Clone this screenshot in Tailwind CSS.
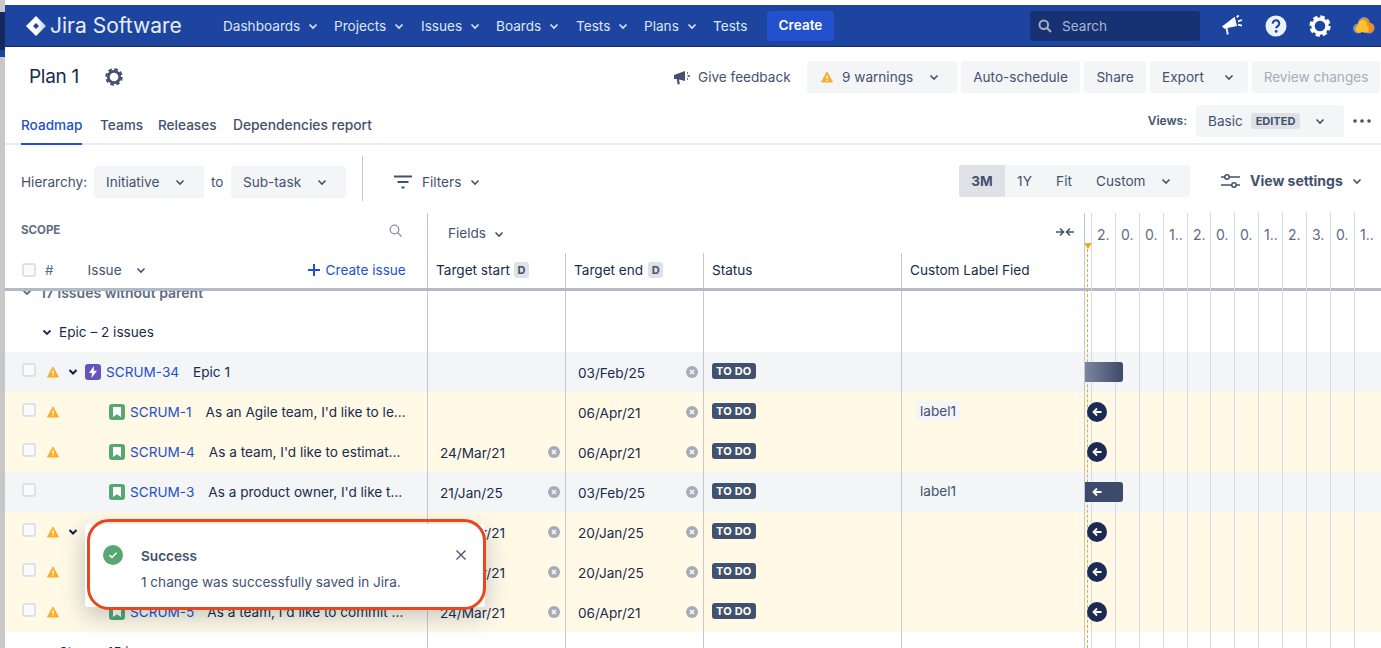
<!DOCTYPE html>
<html lang="en">
<head>
  <meta charset="UTF-8" />
  <title>Plan 1 - Roadmap</title>
  <script src="https://cdn.jsdelivr.net/npm/@tailwindcss/browser@4"></script>
</head>
<body class="bg-white text-[#172b4d] font-['Inter',sans-serif] text-[13.6px]">
<div class="relative flex w-[1381px] h-[648px] overflow-hidden">
  <!-- window edge -->
  <div class="w-[5px] shrink-0 flex flex-col bg-[#c8c8c8]">
    <div class="h-[12px]"></div>
    <div class="h-[38px] bg-[#15295e]"></div>
    <div class="h-[7px] bg-[#1d459f]"></div>
  </div>

  <div class="flex-1 flex flex-col min-w-0">
    <div class="h-[5px] bg-white"></div>

    <!-- Top nav -->
    <header class="h-[42px] shrink-0 flex items-center bg-[#1d459f] border-b border-[#1b2b52] text-[#dfe6f5]">
      <svg class="ml-[21px] w-[20px] h-[20px]" viewBox="0 0 20 20"><defs><linearGradient id="jl" x1="0" x2="1" y1="0" y2="0"><stop offset="0.55" stop-color="#fff"/><stop offset="1" stop-color="#b9c8ea"/></linearGradient></defs><path fill="url(#jl)" fill-rule="evenodd" d="M10 0L20 10 10 20 0 10zM10 7L7 10l3 3 3-3z"/></svg>
      <span class="ml-[4px] w-[173px] text-[21px] leading-none text-white/90">Jira Software</span>
      <nav class="flex items-center pt-[1px]">
        <a class="flex items-center w-[111px]">Dashboards<svg class="ml-[8px] w-[10px] h-[10px]" viewBox="0 0 10 10"><path d="M1.500 3.500L5 7l3.500-3.500" fill="none" stroke="currentColor" stroke-width="1.600"/></svg></a>
        <a class="flex items-center w-[87px]">Projects<svg class="ml-[8px] w-[10px] h-[10px]" viewBox="0 0 10 10"><path d="M1.500 3.500L5 7l3.500-3.500" fill="none" stroke="currentColor" stroke-width="1.600"/></svg></a>
        <a class="flex items-center w-[75px]">Issues<svg class="ml-[8px] w-[10px] h-[10px]" viewBox="0 0 10 10"><path d="M1.500 3.500L5 7l3.500-3.500" fill="none" stroke="currentColor" stroke-width="1.600"/></svg></a>
        <a class="flex items-center w-[80px]">Boards<svg class="ml-[8px] w-[10px] h-[10px]" viewBox="0 0 10 10"><path d="M1.500 3.500L5 7l3.500-3.500" fill="none" stroke="currentColor" stroke-width="1.600"/></svg></a>
        <a class="flex items-center w-[68px]">Tests<svg class="ml-[8px] w-[10px] h-[10px]" viewBox="0 0 10 10"><path d="M1.500 3.500L5 7l3.500-3.500" fill="none" stroke="currentColor" stroke-width="1.600"/></svg></a>
        <a class="flex items-center w-[69px]">Plans<svg class="ml-[8px] w-[10px] h-[10px]" viewBox="0 0 10 10"><path d="M1.500 3.500L5 7l3.500-3.500" fill="none" stroke="currentColor" stroke-width="1.600"/></svg></a>
        <a class="w-[54px]">Tests</a>
        <button class="w-[67px] h-[30px] rounded-[3px] bg-[#2350cd] text-white font-semibold mt-[-1px]">Create</button>
      </nav>
      <div class="ml-[196px] w-[170px] h-[30px] rounded-[3px] bg-[#163273] flex items-center text-[#a9b5d0]">
        <svg class="ml-[8px] w-[14px] h-[14px]" viewBox="0 0 14 14"><circle cx="5.800" cy="5.800" r="4.300" fill="none" stroke="#a9b0bd" stroke-width="2"/><path d="M9 9l4 4" stroke="#a9b0bd" stroke-width="2.200"/></svg>
        <span class="ml-[10px] pt-[1px]">Search</span>
      </div>
      <svg class="ml-[21px] w-[22px] h-[22px]" viewBox="0 0 22 22"><path fill="#fff" d="M1 11.500L13.700 1.700 16 11l-6 1.300-6.500 1.400z"/><path d="M5.500 13l1.300 6.500M15.700 2.300l2-2M17 6.300L21 5M17 9.700l4 1" stroke="#fff" stroke-width="1.800" fill="none"/></svg>
      <svg class="ml-[22px] w-[22px] h-[22px]" viewBox="0 0 22 22"><circle cx="11" cy="11" r="10.500" fill="#edf1fa"/><path d="M7.800 8.600a3.200 3.200 0 116 1.400c-.6 1-2.600 1.600-2.600 3.200" fill="none" stroke="#1d459f" stroke-width="2.200"/><circle cx="11.200" cy="16.400" r="1.400" fill="#1d459f"/></svg>
      <svg class="ml-[22px] w-[22px] h-[22px]" viewBox="0 0 22 22"><circle cx="11" cy="11" r="7" fill="none" stroke="#fff" stroke-width="3.400"/><circle cx="11" cy="11" r="9.400" fill="none" stroke="#fff" stroke-width="2.600" stroke-dasharray="4.400 3"/></svg>
      <svg class="ml-[22px] w-[22px] h-[17px] shrink-0" viewBox="0 0 22 17"><g fill="#5b9bd8"><circle cx="11" cy="5.700" r="5.700"/><circle cx="5" cy="11.500" r="5"/><circle cx="16" cy="11" r="5.500"/></g><g fill="#f58a1f"><circle cx="11.500" cy="6" r="5"/><circle cx="6" cy="11.500" r="4.300"/><circle cx="16.200" cy="11" r="5"/></g><g fill="#fbc22d"><circle cx="9.500" cy="7.500" r="4.500"/><circle cx="6.500" cy="12" r="3.800"/><circle cx="12" cy="12" r="3.800"/></g></svg>
    </header>

    <!-- Plan title row -->
    <div class="h-[60px] shrink-0 flex items-center text-[#42526e]">
      <h1 class="ml-[24px] text-[19px] tracking-[-0.3px] text-[#172b4d] w-[76px]">Plan 1</h1>
      <svg class="w-[18px] h-[18px]" viewBox="0 0 22 22"><circle cx="11" cy="11" r="7" fill="none" stroke="#42526e" stroke-width="3.400"/><circle cx="11" cy="11" r="9.400" fill="none" stroke="#42526e" stroke-width="2.600" stroke-dasharray="4.400 3"/></svg>
      <svg class="ml-[551px] w-[17px] h-[15px]" viewBox="0 0 17 15"><path fill="#42526e" d="M0 5l11-4v10L5 9.400l.8 4.600-2.200.5L2.800 9H0z"/><path d="M13 3h1M13.500 6H16M13 9h1" stroke="#42526e" stroke-width="1.400"/></svg>
      <span class="ml-[7px] w-[109px]">Give feedback</span>
      <div class="w-[150px] h-[32px] mr-[4px] rounded-[3px] bg-[#f4f5f7] flex items-center">
        <svg class="ml-[14px] w-[12px] h-[12px]" viewBox="0 0 12 12"><path fill="#fbae2d" stroke="#fbae2d" stroke-linejoin="round" d="M6 1l5.500 10H.5z"/><path d="M6 4.500v3.500M6 9v1" stroke="#fff" stroke-width="1.300"/></svg>
        <span class="ml-[9px] w-[87px]">9 warnings</span>
        <svg class="w-[10px] h-[10px]" viewBox="0 0 10 10"><path d="M1.500 3.500L5 7l3.500-3.500" fill="none" stroke="currentColor" stroke-width="1.600"/></svg>
      </div>
      <button class="w-[119px] h-[32px] mr-[4px] rounded-[3px] bg-[#f4f5f7]">Auto-schedule</button>
      <button class="w-[62px] h-[32px] mr-[4px] rounded-[3px] bg-[#f4f5f7]">Share</button>
      <div class="w-[98px] h-[32px] mr-[4px] rounded-[3px] bg-[#f4f5f7] flex items-center">
        <span class="ml-[12px] w-[62px]">Export</span>
        <svg class="w-[10px] h-[10px]" viewBox="0 0 10 10"><path d="M1.500 3.500L5 7l3.500-3.500" fill="none" stroke="currentColor" stroke-width="1.600"/></svg>
      </div>
      <button class="w-[128px] h-[32px] rounded-[3px] bg-[#f4f5f7] text-[#a5adba]">Review changes</button>
    </div>

    <!-- Tabs -->
    <div class="h-[38px] shrink-0 flex items-start justify-between border-b-2 border-[#ebecf0] text-[#42526e] font-medium">
      <div class="flex h-[38px] ml-[16px]">
        <a class="h-[38px] w-[61px] pt-[8px] border-b-2 border-[#2350cd] text-[#2350cd]">Roadmap</a>
        <a class="ml-[18px] pt-[8px] w-[42px]">Teams</a>
        <a class="ml-[16px] pt-[8px] w-[59px]">Releases</a>
        <a class="ml-[16px] pt-[8px] text-[13.800px]">Dependencies report</a>
      </div>
      <div class="flex items-center mt-[-2px] h-[32px]">
        <span class="text-[12px] font-semibold mr-[9px]">Views:</span>
        <div class="w-[148px] h-[32px] rounded-[3px] bg-[#f4f5f7] flex items-center font-normal">
          <span class="ml-[12px] w-[35px]">Basic</span>
          <span class="ml-[8px] w-[49px] text-center h-[16px] rounded-[3px] bg-[#dfe1e6] text-[11px] font-bold leading-[16px]">EDITED</span>
          <svg class="ml-[15px] w-[10px] h-[10px]" viewBox="0 0 10 10"><path d="M1.500 3.500L5 7l3.500-3.500" fill="none" stroke="currentColor" stroke-width="1.600"/></svg>
        </div>
        <svg class="ml-[9px] mr-[10px] w-[18px] h-[4px]" viewBox="0 0 18 4"><circle cx="2" cy="2" r="1.800" fill="#42526e"/><circle cx="9" cy="2" r="1.800" fill="#42526e"/><circle cx="16" cy="2" r="1.800" fill="#42526e"/></svg>
      </div>
    </div>

    <!-- Hierarchy + filters row -->
    <div class="h-[68px] shrink-0 flex items-center pt-[6px] text-[#42526e]">
      <span class="ml-[16px] w-[73px]">Hierarchy:</span>
      <div class="w-[110px] h-[32px] rounded-[3px] bg-[#f4f5f7] flex items-center">
        <span class="ml-[12px] w-[69px]">Initiative</span>
        <svg class="w-[10px] h-[10px]" viewBox="0 0 10 10"><path d="M1.500 3.500L5 7l3.500-3.500" fill="none" stroke="currentColor" stroke-width="1.600"/></svg>
      </div>
      <span class="ml-[7px] w-[20px]">to</span>
      <div class="w-[115px] h-[32px] rounded-[3px] bg-[#f4f5f7] flex items-center">
        <span class="ml-[12px] w-[74px]">Sub-task</span>
        <svg class="w-[10px] h-[10px]" viewBox="0 0 10 10"><path d="M1.500 3.500L5 7l3.500-3.500" fill="none" stroke="currentColor" stroke-width="1.600"/></svg>
      </div>
      <div class="ml-[16px] mb-[7px] w-px h-[45px] bg-[#c1c7d0]"></div>
      <svg class="ml-[31px] w-[18px] h-[14px]" viewBox="0 0 18 14"><path d="M0 1.500h18M3.500 7h11M7.500 12.500h3" stroke="#42526e" stroke-width="2"/></svg>
      <span class="ml-[10px] w-[48px]">Filters</span>
      <svg class="w-[10px] h-[10px]" viewBox="0 0 10 10"><path d="M1.500 3.500L5 7l3.500-3.500" fill="none" stroke="currentColor" stroke-width="1.600"/></svg>
      <div class="ml-[479px] h-[32px] w-[231px] rounded-[3px] bg-[#f4f5f7] flex items-center mt-[-2px] overflow-hidden">
        <span class="w-[46px] h-[32px] leading-[32px] text-center font-bold bg-[#dfe1e6]">3M</span>
        <span class="w-[39px] text-center">1Y</span>
        <span class="w-[40px] text-center">Fit</span>
        <span class="ml-[12px] w-[65px]">Custom</span>
        <svg class="w-[10px] h-[10px]" viewBox="0 0 10 10"><path d="M1.500 3.500L5 7l3.500-3.500" fill="none" stroke="currentColor" stroke-width="1.600"/></svg>
      </div>
      <svg class="ml-[31px] w-[19px] h-[14px] mt-[-2px]" viewBox="0 0 19 14"><path d="M0 3h19M0 11h19" stroke="#42526e" stroke-width="1.600"/><circle cx="6" cy="3" r="2.200" fill="#fff" stroke="#42526e" stroke-width="1.500"/><circle cx="13" cy="11" r="2.200" fill="#fff" stroke="#42526e" stroke-width="1.500"/></svg>
      <span class="ml-[10px] w-[102px] text-[14px] font-bold mt-[-4px]">View settings</span>
      <svg class="w-[10px] h-[10px] mt-[-2px]" viewBox="0 0 10 10"><path d="M1.500 3.500L5 7l3.500-3.500" fill="none" stroke="currentColor" stroke-width="1.600"/></svg>
    </div>

    <!-- Table header -->
    <div class="relative h-[78px] shrink-0 grid grid-cols-[422px_138px_138px_198px_183px_1fr] grid-rows-[40px_35px] border-b-[3px] border-[#b3bac5] text-[#42526e]">
      <div class="col-start-1 row-start-1 flex items-center justify-between pl-[16px] pr-[25px] pb-[4px]">
        <span class="text-[11.500px] font-bold text-[#5e6c84]">SCOPE</span>
        <svg class="w-[13px] h-[13px] mb-[2px]" viewBox="0 0 13 13"><circle cx="5.500" cy="5.500" r="4.300" fill="none" stroke="#8993a4" stroke-width="1.300"/><path d="M8.500 8.500l4 4" stroke="#8993a4" stroke-width="1.300"/></svg>
      </div>
      <div class="col-start-2 col-span-4 row-start-1 border-l border-[#c4c7d4] flex items-center pl-[20px] pt-[1px]">
        <span class="w-[46px]">Fields</span>
        <svg class="w-[10px] h-[10px]" viewBox="0 0 10 10"><path d="M1.500 3.500L5 7l3.500-3.500" fill="none" stroke="currentColor" stroke-width="1.600"/></svg>
        <svg class="ml-[552px] mb-[4px] w-[18px] h-[10px]" viewBox="0 0 18 10"><path d="M0 5h7M4 1.500L7.500 5 4 8.500M18 5h-7M14 1.500L10.500 5 14 8.500" fill="none" stroke="#42526e" stroke-width="1.600"/></svg>
      </div>
      <div class="col-start-1 row-start-2 flex items-center pb-[1px]">
        <span class="ml-[17px] w-[14px] h-[14px] rounded-[3px] border-2 border-[#dfe1e6] bg-[#fafbfc]"></span>
        <span class="ml-[9px] text-[#5e6c84]">#</span>
        <span class="ml-[34px] w-[48px]">Issue</span>
        <svg class="w-[10px] h-[10px]" viewBox="0 0 10 10"><path d="M1.500 3.500L5 7l3.500-3.500" fill="none" stroke="currentColor" stroke-width="1.600"/></svg>
        <svg class="ml-[162px] w-[12px] h-[12px]" viewBox="0 0 12 12"><path d="M6 0v12M0 6h12" stroke="#2350cd" stroke-width="2"/></svg>
        <span class="ml-[6px] text-[#2350cd]">Create issue</span>
      </div>
      <div class="row-start-2 border-l border-[#c4c7d4] flex items-center pl-[8px] pb-[1px] text-[#172b4d]">Target start<span class="ml-[4px] w-[15px] h-[16px] rounded-[3px] bg-[#dfe1e6] text-[#42526e] text-[11px] font-bold text-center leading-[16px]">D</span></div>
      <div class="row-start-2 border-l border-[#c4c7d4] flex items-center pl-[8px] pb-[1px] text-[#172b4d]">Target end<span class="ml-[5px] w-[15px] h-[16px] rounded-[3px] bg-[#dfe1e6] text-[#42526e] text-[11px] font-bold text-center leading-[16px]">D</span></div>
      <div class="row-start-2 border-l border-[#c4c7d4] flex items-center pl-[8px] pb-[1px] text-[#172b4d]">Status</div>
      <div class="row-start-2 border-l border-[#c4c7d4] flex items-center pl-[8px] pb-[1px] text-[#172b4d]">Custom Label Fied</div>
      <div class="col-start-6 row-start-1 row-span-2 border-l border-[#c4c7d4]"></div>
    </div>

    <!-- Rows: scrolled under the header -->
    <div class="relative flex-1 min-h-0 overflow-hidden">
      <div class="mt-[-19px]">
        <!-- group rows -->
        <div class="h-[40px] grid grid-cols-[422px_138px_138px_198px_183px_1fr]">
          <div class="flex items-center text-[14px] font-semibold text-[#5e6c84]">
            <svg class="ml-[17px] w-[10px] h-[10px]" viewBox="0 0 10 10"><path d="M1.500 3.500L5 7l3.500-3.500" fill="none" stroke="currentColor" stroke-width="1.800"/></svg>
            <span class="ml-[8px]">17 issues without parent</span>
          </div>
          <div class="border-l border-[#c4c7d4]"></div><div class="border-l border-[#c4c7d4]"></div><div class="border-l border-[#c4c7d4]"></div><div class="border-l border-[#c4c7d4]"></div><div class="border-l border-[#c4c7d4]"></div>
        </div>
        <div class="h-[40px] grid grid-cols-[422px_138px_138px_198px_183px_1fr]">
          <div class="flex items-center">
            <svg class="ml-[37px] w-[10px] h-[10px]" viewBox="0 0 10 10"><path d="M1.500 3.500L5 7l3.500-3.500" fill="none" stroke="currentColor" stroke-width="1.800"/></svg>
            <span class="ml-[7px]">Epic – 2 issues</span>
          </div>
          <div class="border-l border-[#c4c7d4]"></div><div class="border-l border-[#c4c7d4]"></div><div class="border-l border-[#c4c7d4]"></div><div class="border-l border-[#c4c7d4]"></div><div class="border-l border-[#c4c7d4]"></div>
        </div>

        <!-- SCRUM-34 -->
        <div class="h-[40px] grid grid-cols-[422px_138px_138px_198px_183px_1fr] bg-[#f4f5f7]">
          <div class="flex items-center">
            <span class="ml-[17px] mb-[4px] w-[14px] h-[14px] rounded-[3px] border-2 border-[#dfe1e6] bg-[#fafbfc]"></span>
            <svg class="ml-[11px] w-[12px] h-[12px]" viewBox="0 0 12 12"><path fill="#fbae2d" stroke="#fbae2d" stroke-linejoin="round" d="M6 1l5.500 10H.5z"/><path d="M6 4.500v3.500M6 9v1" stroke="#fff" stroke-width="1.300"/></svg>
            <svg class="ml-[9px] w-[10px] h-[10px]" viewBox="0 0 10 10"><path d="M1.500 3L5 6.500 8.500 3" fill="none" stroke="#091e42" stroke-width="2"/></svg>
            <span class="ml-[7px] w-[16px] h-[16px] rounded-[3px] bg-[#6554c0] flex items-center justify-center"><svg class="w-[10px] h-[12px]" viewBox="0 0 10 12"><path fill="#fff" d="M6 0L1 7h3L3.500 12 9 4.800H5.700z"/></svg></span>
            <span class="ml-[5px] text-[#2350cd]">SCRUM-34</span>
            <span class="ml-[14px]">Epic 1</span>
          </div>
          <div class="border-l border-[#c4c7d4]"></div>
          <div class="border-l border-[#c4c7d4] flex items-center pl-[12px] pr-[5px] justify-between"><span class="pt-[2px]">03/Feb/25</span><svg class="w-[12px] h-[12px]" viewBox="0 0 12 12"><circle cx="6" cy="6" r="6" fill="#a5adba"/><path d="M4 4l4 4M8 4l-4 4" stroke="#f4f5f7" stroke-width="1.700"/></svg></div>
          <div class="border-l border-[#c4c7d4] flex items-center pl-[8px] pb-[2px]"><span class="px-[4px] h-[16px] rounded-[3px] bg-[#42526e] text-white text-[11px] tracking-[0.2px] font-bold leading-[16px]">TO DO</span></div>
          <div class="border-l border-[#c4c7d4]"></div>
          <div class="border-l border-[#c4c7d4]"></div>
        </div>

        <!-- SCRUM-1 -->
        <div class="h-[40px] grid grid-cols-[422px_138px_138px_198px_183px_1fr] bg-[#fff9e6]">
          <div class="flex items-center">
            <span class="ml-[17px] mb-[4px] w-[14px] h-[14px] shrink-0 rounded-[3px] border-2 border-[#dfe1e6] bg-[#fafbfc]"></span>
            <svg class="ml-[11px] w-[12px] h-[12px] shrink-0" viewBox="0 0 12 12"><path fill="#fbae2d" stroke="#fbae2d" stroke-linejoin="round" d="M6 1l5.500 10H.5z"/><path d="M6 4.500v3.500M6 9v1" stroke="#fff" stroke-width="1.300"/></svg>
            <span class="ml-[50px] w-[16px] h-[16px] shrink-0 rounded-[3px] bg-[#57a773] flex items-center justify-center"><svg class="w-[8px] h-[10px]" viewBox="0 0 8 10"><path fill="#fff" d="M0 0h8v10L4 7.200 0 10z"/></svg></span>
            <span class="ml-[5px] shrink-0 text-[#2350cd]">SCRUM-1</span>
            <span class="ml-[14px] whitespace-nowrap">As an Agile team, I'd like to le...</span>
          </div>
          <div class="border-l border-[#c4c7d4]"></div>
          <div class="border-l border-[#c4c7d4] flex items-center pl-[12px] pr-[5px] justify-between"><span class="pt-[2px]">06/Apr/21</span><svg class="w-[12px] h-[12px]" viewBox="0 0 12 12"><circle cx="6" cy="6" r="6" fill="#a5adba"/><path d="M4 4l4 4M8 4l-4 4" stroke="#fff9e6" stroke-width="1.700"/></svg></div>
          <div class="border-l border-[#c4c7d4] flex items-center pl-[8px] pb-[2px]"><span class="px-[4px] h-[16px] rounded-[3px] bg-[#42526e] text-white text-[11px] tracking-[0.2px] font-bold leading-[16px]">TO DO</span></div>
          <div class="border-l border-[#c4c7d4] flex items-center pl-[14px] pb-[2px]"><span class="px-[4px] h-[20px] rounded-[3px] bg-[#f4f5f7] text-[#42526e] leading-[20px]">label1</span></div>
          <div class="border-l border-[#c4c7d4]"></div>
        </div>

        <!-- SCRUM-4 -->
        <div class="h-[40px] grid grid-cols-[422px_138px_138px_198px_183px_1fr] bg-[#fff9e6]">
          <div class="flex items-center">
            <span class="ml-[17px] mb-[4px] w-[14px] h-[14px] shrink-0 rounded-[3px] border-2 border-[#dfe1e6] bg-[#fafbfc]"></span>
            <svg class="ml-[11px] w-[12px] h-[12px] shrink-0" viewBox="0 0 12 12"><path fill="#fbae2d" stroke="#fbae2d" stroke-linejoin="round" d="M6 1l5.500 10H.5z"/><path d="M6 4.500v3.500M6 9v1" stroke="#fff" stroke-width="1.300"/></svg>
            <span class="ml-[50px] w-[16px] h-[16px] shrink-0 rounded-[3px] bg-[#57a773] flex items-center justify-center"><svg class="w-[8px] h-[10px]" viewBox="0 0 8 10"><path fill="#fff" d="M0 0h8v10L4 7.200 0 10z"/></svg></span>
            <span class="ml-[5px] shrink-0 text-[#2350cd]">SCRUM-4</span>
            <span class="ml-[14px] whitespace-nowrap">As a team, I'd like to estimat...</span>
          </div>
          <div class="border-l border-[#c4c7d4] flex items-center pl-[12px] pr-[5px] justify-between"><span class="pt-[2px]">24/Mar/21</span><svg class="w-[12px] h-[12px]" viewBox="0 0 12 12"><circle cx="6" cy="6" r="6" fill="#a5adba"/><path d="M4 4l4 4M8 4l-4 4" stroke="#fff9e6" stroke-width="1.700"/></svg></div>
          <div class="border-l border-[#c4c7d4] flex items-center pl-[12px] pr-[5px] justify-between"><span class="pt-[2px]">06/Apr/21</span><svg class="w-[12px] h-[12px]" viewBox="0 0 12 12"><circle cx="6" cy="6" r="6" fill="#a5adba"/><path d="M4 4l4 4M8 4l-4 4" stroke="#fff9e6" stroke-width="1.700"/></svg></div>
          <div class="border-l border-[#c4c7d4] flex items-center pl-[8px] pb-[2px]"><span class="px-[4px] h-[16px] rounded-[3px] bg-[#42526e] text-white text-[11px] tracking-[0.2px] font-bold leading-[16px]">TO DO</span></div>
          <div class="border-l border-[#c4c7d4]"></div>
          <div class="border-l border-[#c4c7d4]"></div>
        </div>

        <!-- SCRUM-3 -->
        <div class="h-[40px] grid grid-cols-[422px_138px_138px_198px_183px_1fr] bg-[#f4f5f7]">
          <div class="flex items-center">
            <span class="ml-[17px] mb-[4px] w-[14px] h-[14px] shrink-0 rounded-[3px] border-2 border-[#dfe1e6] bg-[#fafbfc]"></span>
            <span class="ml-[73px] w-[16px] h-[16px] shrink-0 rounded-[3px] bg-[#57a773] flex items-center justify-center"><svg class="w-[8px] h-[10px]" viewBox="0 0 8 10"><path fill="#fff" d="M0 0h8v10L4 7.200 0 10z"/></svg></span>
            <span class="ml-[5px] shrink-0 text-[#2350cd]">SCRUM-3</span>
            <span class="ml-[14px] whitespace-nowrap">As a product owner, I'd like t...</span>
          </div>
          <div class="border-l border-[#c4c7d4] flex items-center pl-[12px] pr-[5px] justify-between"><span class="pt-[2px]">21/Jan/25</span><svg class="w-[12px] h-[12px]" viewBox="0 0 12 12"><circle cx="6" cy="6" r="6" fill="#a5adba"/><path d="M4 4l4 4M8 4l-4 4" stroke="#f4f5f7" stroke-width="1.700"/></svg></div>
          <div class="border-l border-[#c4c7d4] flex items-center pl-[12px] pr-[5px] justify-between"><span class="pt-[2px]">03/Feb/25</span><svg class="w-[12px] h-[12px]" viewBox="0 0 12 12"><circle cx="6" cy="6" r="6" fill="#a5adba"/><path d="M4 4l4 4M8 4l-4 4" stroke="#f4f5f7" stroke-width="1.700"/></svg></div>
          <div class="border-l border-[#c4c7d4] flex items-center pl-[8px] pb-[2px]"><span class="px-[4px] h-[16px] rounded-[3px] bg-[#42526e] text-white text-[11px] tracking-[0.2px] font-bold leading-[16px]">TO DO</span></div>
          <div class="border-l border-[#c4c7d4] flex items-center pl-[14px] pb-[2px]"><span class="px-[4px] text-[#42526e]">label1</span></div>
          <div class="border-l border-[#c4c7d4]"></div>
        </div>

        <!-- rows behind the toast -->
        <div class="h-[40px] grid grid-cols-[422px_138px_138px_198px_183px_1fr] bg-[#fff9e6]">
          <div class="flex items-center">
            <span class="ml-[17px] mb-[4px] w-[14px] h-[14px] shrink-0 rounded-[3px] border-2 border-[#dfe1e6] bg-[#fafbfc]"></span>
            <svg class="ml-[11px] w-[12px] h-[12px] shrink-0" viewBox="0 0 12 12"><path fill="#fbae2d" stroke="#fbae2d" stroke-linejoin="round" d="M6 1l5.500 10H.5z"/><path d="M6 4.500v3.500M6 9v1" stroke="#fff" stroke-width="1.300"/></svg>
            <svg class="ml-[9px] w-[10px] h-[10px]" viewBox="0 0 10 10"><path d="M1.500 3L5 6.500 8.500 3" fill="none" stroke="#091e42" stroke-width="2"/></svg>
          </div>
          <div class="border-l border-[#c4c7d4] flex items-center pl-[12px] pr-[5px] justify-between"><span class="pt-[2px]">24/Mar/21</span><svg class="w-[12px] h-[12px]" viewBox="0 0 12 12"><circle cx="6" cy="6" r="6" fill="#a5adba"/><path d="M4 4l4 4M8 4l-4 4" stroke="#fff9e6" stroke-width="1.700"/></svg></div>
          <div class="border-l border-[#c4c7d4] flex items-center pl-[12px] pr-[5px] justify-between"><span class="pt-[2px]">20/Jan/25</span><svg class="w-[12px] h-[12px]" viewBox="0 0 12 12"><circle cx="6" cy="6" r="6" fill="#a5adba"/><path d="M4 4l4 4M8 4l-4 4" stroke="#fff9e6" stroke-width="1.700"/></svg></div>
          <div class="border-l border-[#c4c7d4] flex items-center pl-[8px] pb-[2px]"><span class="px-[4px] h-[16px] rounded-[3px] bg-[#42526e] text-white text-[11px] tracking-[0.2px] font-bold leading-[16px]">TO DO</span></div>
          <div class="border-l border-[#c4c7d4]"></div>
          <div class="border-l border-[#c4c7d4]"></div>
        </div>
        <div class="h-[40px] grid grid-cols-[422px_138px_138px_198px_183px_1fr] bg-[#fff9e6]">
          <div class="flex items-center">
            <span class="ml-[17px] mb-[4px] w-[14px] h-[14px] shrink-0 rounded-[3px] border-2 border-[#dfe1e6] bg-[#fafbfc]"></span>
            <svg class="ml-[11px] w-[12px] h-[12px] shrink-0" viewBox="0 0 12 12"><path fill="#fbae2d" stroke="#fbae2d" stroke-linejoin="round" d="M6 1l5.500 10H.5z"/><path d="M6 4.500v3.500M6 9v1" stroke="#fff" stroke-width="1.300"/></svg>
          </div>
          <div class="border-l border-[#c4c7d4] flex items-center pl-[12px] pr-[5px] justify-between"><span class="pt-[2px]">24/Mar/21</span><svg class="w-[12px] h-[12px]" viewBox="0 0 12 12"><circle cx="6" cy="6" r="6" fill="#a5adba"/><path d="M4 4l4 4M8 4l-4 4" stroke="#fff9e6" stroke-width="1.700"/></svg></div>
          <div class="border-l border-[#c4c7d4] flex items-center pl-[12px] pr-[5px] justify-between"><span class="pt-[2px]">20/Jan/25</span><svg class="w-[12px] h-[12px]" viewBox="0 0 12 12"><circle cx="6" cy="6" r="6" fill="#a5adba"/><path d="M4 4l4 4M8 4l-4 4" stroke="#fff9e6" stroke-width="1.700"/></svg></div>
          <div class="border-l border-[#c4c7d4] flex items-center pl-[8px] pb-[2px]"><span class="px-[4px] h-[16px] rounded-[3px] bg-[#42526e] text-white text-[11px] tracking-[0.2px] font-bold leading-[16px]">TO DO</span></div>
          <div class="border-l border-[#c4c7d4]"></div>
          <div class="border-l border-[#c4c7d4]"></div>
        </div>

        <!-- SCRUM-5 -->
        <div class="h-[40px] grid grid-cols-[422px_138px_138px_198px_183px_1fr] bg-[#fff9e6]">
          <div class="flex items-center">
            <span class="ml-[17px] mb-[4px] w-[14px] h-[14px] shrink-0 rounded-[3px] border-2 border-[#dfe1e6] bg-[#fafbfc]"></span>
            <svg class="ml-[11px] w-[12px] h-[12px] shrink-0" viewBox="0 0 12 12"><path fill="#fbae2d" stroke="#fbae2d" stroke-linejoin="round" d="M6 1l5.500 10H.5z"/><path d="M6 4.500v3.500M6 9v1" stroke="#fff" stroke-width="1.300"/></svg>
            <span class="ml-[50px] w-[16px] h-[16px] shrink-0 rounded-[3px] bg-[#57a773] flex items-center justify-center"><svg class="w-[8px] h-[10px]" viewBox="0 0 8 10"><path fill="#fff" d="M0 0h8v10L4 7.200 0 10z"/></svg></span>
            <span class="ml-[5px] shrink-0 text-[#2350cd]">SCRUM-5</span>
            <span class="ml-[13px] whitespace-nowrap">As a team, I'd like to commit ...</span>
          </div>
          <div class="border-l border-[#c4c7d4] flex items-center pl-[12px] pr-[5px] justify-between"><span class="pt-[2px]">24/Mar/21</span><svg class="w-[12px] h-[12px]" viewBox="0 0 12 12"><circle cx="6" cy="6" r="6" fill="#a5adba"/><path d="M4 4l4 4M8 4l-4 4" stroke="#fff9e6" stroke-width="1.700"/></svg></div>
          <div class="border-l border-[#c4c7d4] flex items-center pl-[12px] pr-[5px] justify-between"><span class="pt-[2px]">06/Apr/21</span><svg class="w-[12px] h-[12px]" viewBox="0 0 12 12"><circle cx="6" cy="6" r="6" fill="#a5adba"/><path d="M4 4l4 4M8 4l-4 4" stroke="#fff9e6" stroke-width="1.700"/></svg></div>
          <div class="border-l border-[#c4c7d4] flex items-center pl-[8px] pb-[2px]"><span class="px-[4px] h-[16px] rounded-[3px] bg-[#42526e] text-white text-[11px] tracking-[0.2px] font-bold leading-[16px]">TO DO</span></div>
          <div class="border-l border-[#c4c7d4]"></div>
          <div class="border-l border-[#c4c7d4]"></div>
        </div>

        <!-- Story group -->
        <div class="h-[40px] grid grid-cols-[422px_138px_138px_198px_183px_1fr]">
          <div class="flex items-center">
            <svg class="ml-[37px] w-[10px] h-[10px]" viewBox="0 0 10 10"><path d="M1.500 3.500L5 7l3.500-3.500" fill="none" stroke="currentColor" stroke-width="1.800"/></svg>
            <span class="ml-[7px]">Story – 15 issues</span>
          </div>
          <div class="border-l border-[#c4c7d4]"></div><div class="border-l border-[#c4c7d4]"></div><div class="border-l border-[#c4c7d4]"></div><div class="border-l border-[#c4c7d4]"></div><div class="border-l border-[#c4c7d4]"></div>
        </div>
      </div>
    </div>
  </div>

  <!-- Timeline columns, drawn over the rows -->
  <div class="absolute left-[1085px] right-0 top-[213px] bottom-0 flex pointer-events-none text-[14px] text-[#5e6c84]">
    <div class="w-[7px] border-r border-[#d8dae3]"></div>
    <div class="w-[24px] border-r border-[#d8dae3] pl-[5px] pt-[11px]">2.</div>
    <div class="w-[24px] border-r border-[#d8dae3] pl-[5px] pt-[11px]">0.</div>
    <div class="w-[24px] border-r border-[#d8dae3] pl-[5px] pt-[11px]">0.</div>
    <div class="w-[24px] border-r border-[#d8dae3] pl-[5px] pt-[11px]">1..</div>
    <div class="w-[23px] border-r border-[#d8dae3] pl-[5px] pt-[11px]">2.</div>
    <div class="w-[24px] border-r border-[#d8dae3] pl-[5px] pt-[11px]">0.</div>
    <div class="w-[24px] border-r border-[#d8dae3] pl-[5px] pt-[11px]">0.</div>
    <div class="w-[24px] border-r border-[#d8dae3] pl-[5px] pt-[11px]">1..</div>
    <div class="w-[24px] border-r border-[#d8dae3] pl-[5px] pt-[11px]">2.</div>
    <div class="w-[24px] border-r border-[#d8dae3] pl-[5px] pt-[11px]">3.</div>
    <div class="w-[24px] border-r border-[#d8dae3] pl-[5px] pt-[11px]">0.</div>
    <div class="w-[24px] pl-[5px] pt-[11px]">1..</div>
  </div>

  <!-- Today marker -->
  <div class="absolute left-[1087px] top-[249px] bottom-0 border-l border-dashed border-[#f5a623]"></div>
  <div class="absolute left-[1084px] top-[243px] w-0 h-0 border-x-[4px] border-x-transparent border-t-[6px] border-t-[#f5a623]"></div>

  <!-- Timeline bars -->
  <div class="absolute left-[1085px] top-[362px] w-[38px] h-[20px] rounded-r-[3px] bg-gradient-to-r from-[#7d869e] to-[#3c4a6b]"></div>
  <div class="absolute left-[1085px] top-[482px] w-[38px] h-[20px] rounded-r-[3px] bg-[#3c4a6b] flex items-center pl-[7px]"><svg class="w-[10px] h-[10px]" viewBox="0 0 10 10"><path d="M9.500 5H1.500M5 1.500L1.500 5 5 8.500" fill="none" stroke="#fff" stroke-width="1.800"/></svg></div>
  <div class="absolute left-[1087px] top-[402px] w-[20px] h-[20px] rounded-full bg-[#1b2b52] flex items-center justify-center"><svg class="w-[10px] h-[10px]" viewBox="0 0 10 10"><path d="M9.500 5H1.500M5 1.500L1.500 5 5 8.500" fill="none" stroke="#fff" stroke-width="1.800"/></svg></div>
  <div class="absolute left-[1087px] top-[442px] w-[20px] h-[20px] rounded-full bg-[#1b2b52] flex items-center justify-center"><svg class="w-[10px] h-[10px]" viewBox="0 0 10 10"><path d="M9.500 5H1.500M5 1.500L1.500 5 5 8.500" fill="none" stroke="#fff" stroke-width="1.800"/></svg></div>
  <div class="absolute left-[1087px] top-[522px] w-[20px] h-[20px] rounded-full bg-[#1b2b52] flex items-center justify-center"><svg class="w-[10px] h-[10px]" viewBox="0 0 10 10"><path d="M9.500 5H1.500M5 1.500L1.500 5 5 8.500" fill="none" stroke="#fff" stroke-width="1.800"/></svg></div>
  <div class="absolute left-[1087px] top-[562px] w-[20px] h-[20px] rounded-full bg-[#1b2b52] flex items-center justify-center"><svg class="w-[10px] h-[10px]" viewBox="0 0 10 10"><path d="M9.500 5H1.500M5 1.500L1.500 5 5 8.500" fill="none" stroke="#fff" stroke-width="1.800"/></svg></div>
  <div class="absolute left-[1087px] top-[602px] w-[20px] h-[20px] rounded-full bg-[#1b2b52] flex items-center justify-center"><svg class="w-[10px] h-[10px]" viewBox="0 0 10 10"><path d="M9.500 5H1.500M5 1.500L1.500 5 5 8.500" fill="none" stroke="#fff" stroke-width="1.800"/></svg></div>

  <!-- Success toast with the red call-out drawn round it -->
  <div class="absolute left-[85px] top-[524px] w-[400px] h-[83px] bg-white rounded-[3px] shadow-[0_8px_24px_rgba(9,30,66,0.25)] text-[#42526e]">
    <svg class="absolute left-[18px] top-[21px] w-[20px] h-[20px]" viewBox="0 0 20 20"><circle cx="10" cy="10" r="10" fill="#57a773"/><path d="M6.500 10.200l2.500 2.300 4.500-4.700" fill="none" stroke="#fff" stroke-width="1.600"/></svg>
    <p class="absolute left-[56px] top-[23px] font-semibold leading-[18px]">Success</p>
    <p class="absolute left-[56px] top-[49px] leading-[18px]">1 change was successfully saved in Jira.</p>
    <svg class="absolute left-[371px] top-[26px] w-[10px] h-[10px]" viewBox="0 0 10 10"><path d="M.5.500l9 9M9.500.500l-9 9" stroke="#42526e" stroke-width="1.300"/></svg>
    <div class="absolute left-[2px] top-[-5px] w-[399px] h-[91px] rounded-[22px] border-[3px] border-[#e8481f]"></div>
  </div>
</div>
</body>
</html>
